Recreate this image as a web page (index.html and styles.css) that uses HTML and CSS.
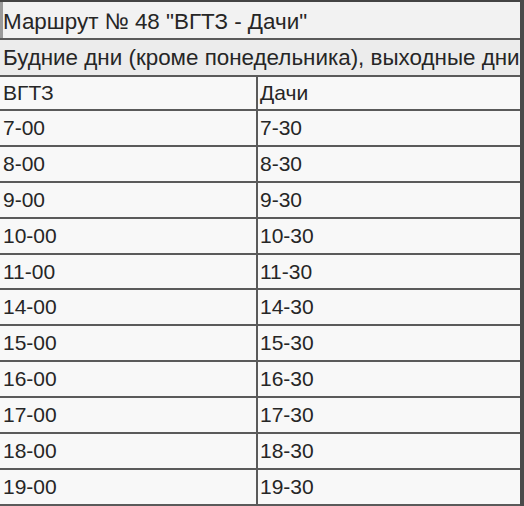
FILE: index.html
```html
<!DOCTYPE html>
<html lang="ru">
<head>
<meta charset="utf-8">
<title>Маршрут № 48</title>
<link rel="stylesheet" href="styles.css">
</head>
<body>
<table class="schedule">
  <colgroup><col class="col-a"><col class="col-b"></colgroup>
  <tr class="row-title"><td colspan="2">Маршрут № 48 "ВГТЗ - Дачи"</td></tr>
  <tr class="row-sub"><td colspan="2">Будние дни (кроме понедельника), выходные дни</td></tr>
  <tr class="row-head"><td>ВГТЗ</td><td>Дачи</td></tr>
  <tr class="row"><td>7-00</td><td>7-30</td></tr>
  <tr class="row"><td>8-00</td><td>8-30</td></tr>
  <tr class="row"><td>9-00</td><td>9-30</td></tr>
  <tr class="row"><td>10-00</td><td>10-30</td></tr>
  <tr class="row"><td>11-00</td><td>11-30</td></tr>
  <tr class="row"><td>14-00</td><td>14-30</td></tr>
  <tr class="row"><td>15-00</td><td>15-30</td></tr>
  <tr class="row"><td>16-00</td><td>16-30</td></tr>
  <tr class="row"><td>17-00</td><td>17-30</td></tr>
  <tr class="row"><td>18-00</td><td>18-30</td></tr>
  <tr class="row"><td>19-00</td><td>19-30</td></tr>
</table>
</body>
</html>
```
FILE: styles.css
```css
html, body {
  margin: 0;
  padding: 0;
  background: #f7f7f7;
}
.schedule {
  width: 524px;
  border-collapse: collapse;
  table-layout: fixed;
  font-family: "Liberation Sans", Arial, sans-serif;
  font-size: 21px;
  color: #262626;
  background: #f8f8f8;
  border-top: 2px solid #444;
  border-right: 4px solid #4a4a4a;
}
.col-a { width: 257px; }
.schedule td {
  padding: 0 0 0 3px;
  border-bottom: 2px solid #5a5a5a;
  white-space: nowrap;
  overflow: hidden;
  vertical-align: middle;
}
.schedule td + td {
  border-left: 2px solid #5a5a5a;
  padding-left: 2px;
}
.row-title td {
  height: 32px;
  font-size: 22.4px;
  background: #f2f2f2;
  padding-top: 4px;
  box-shadow: inset 3px 0 0 #9a9a9a;
}
.row-sub td {
  height: 35px;
  font-size: 22.4px;
  background: #ececec;
}
.row-head td { height: 32px; }
.row td { height: 33.9px; }
```
